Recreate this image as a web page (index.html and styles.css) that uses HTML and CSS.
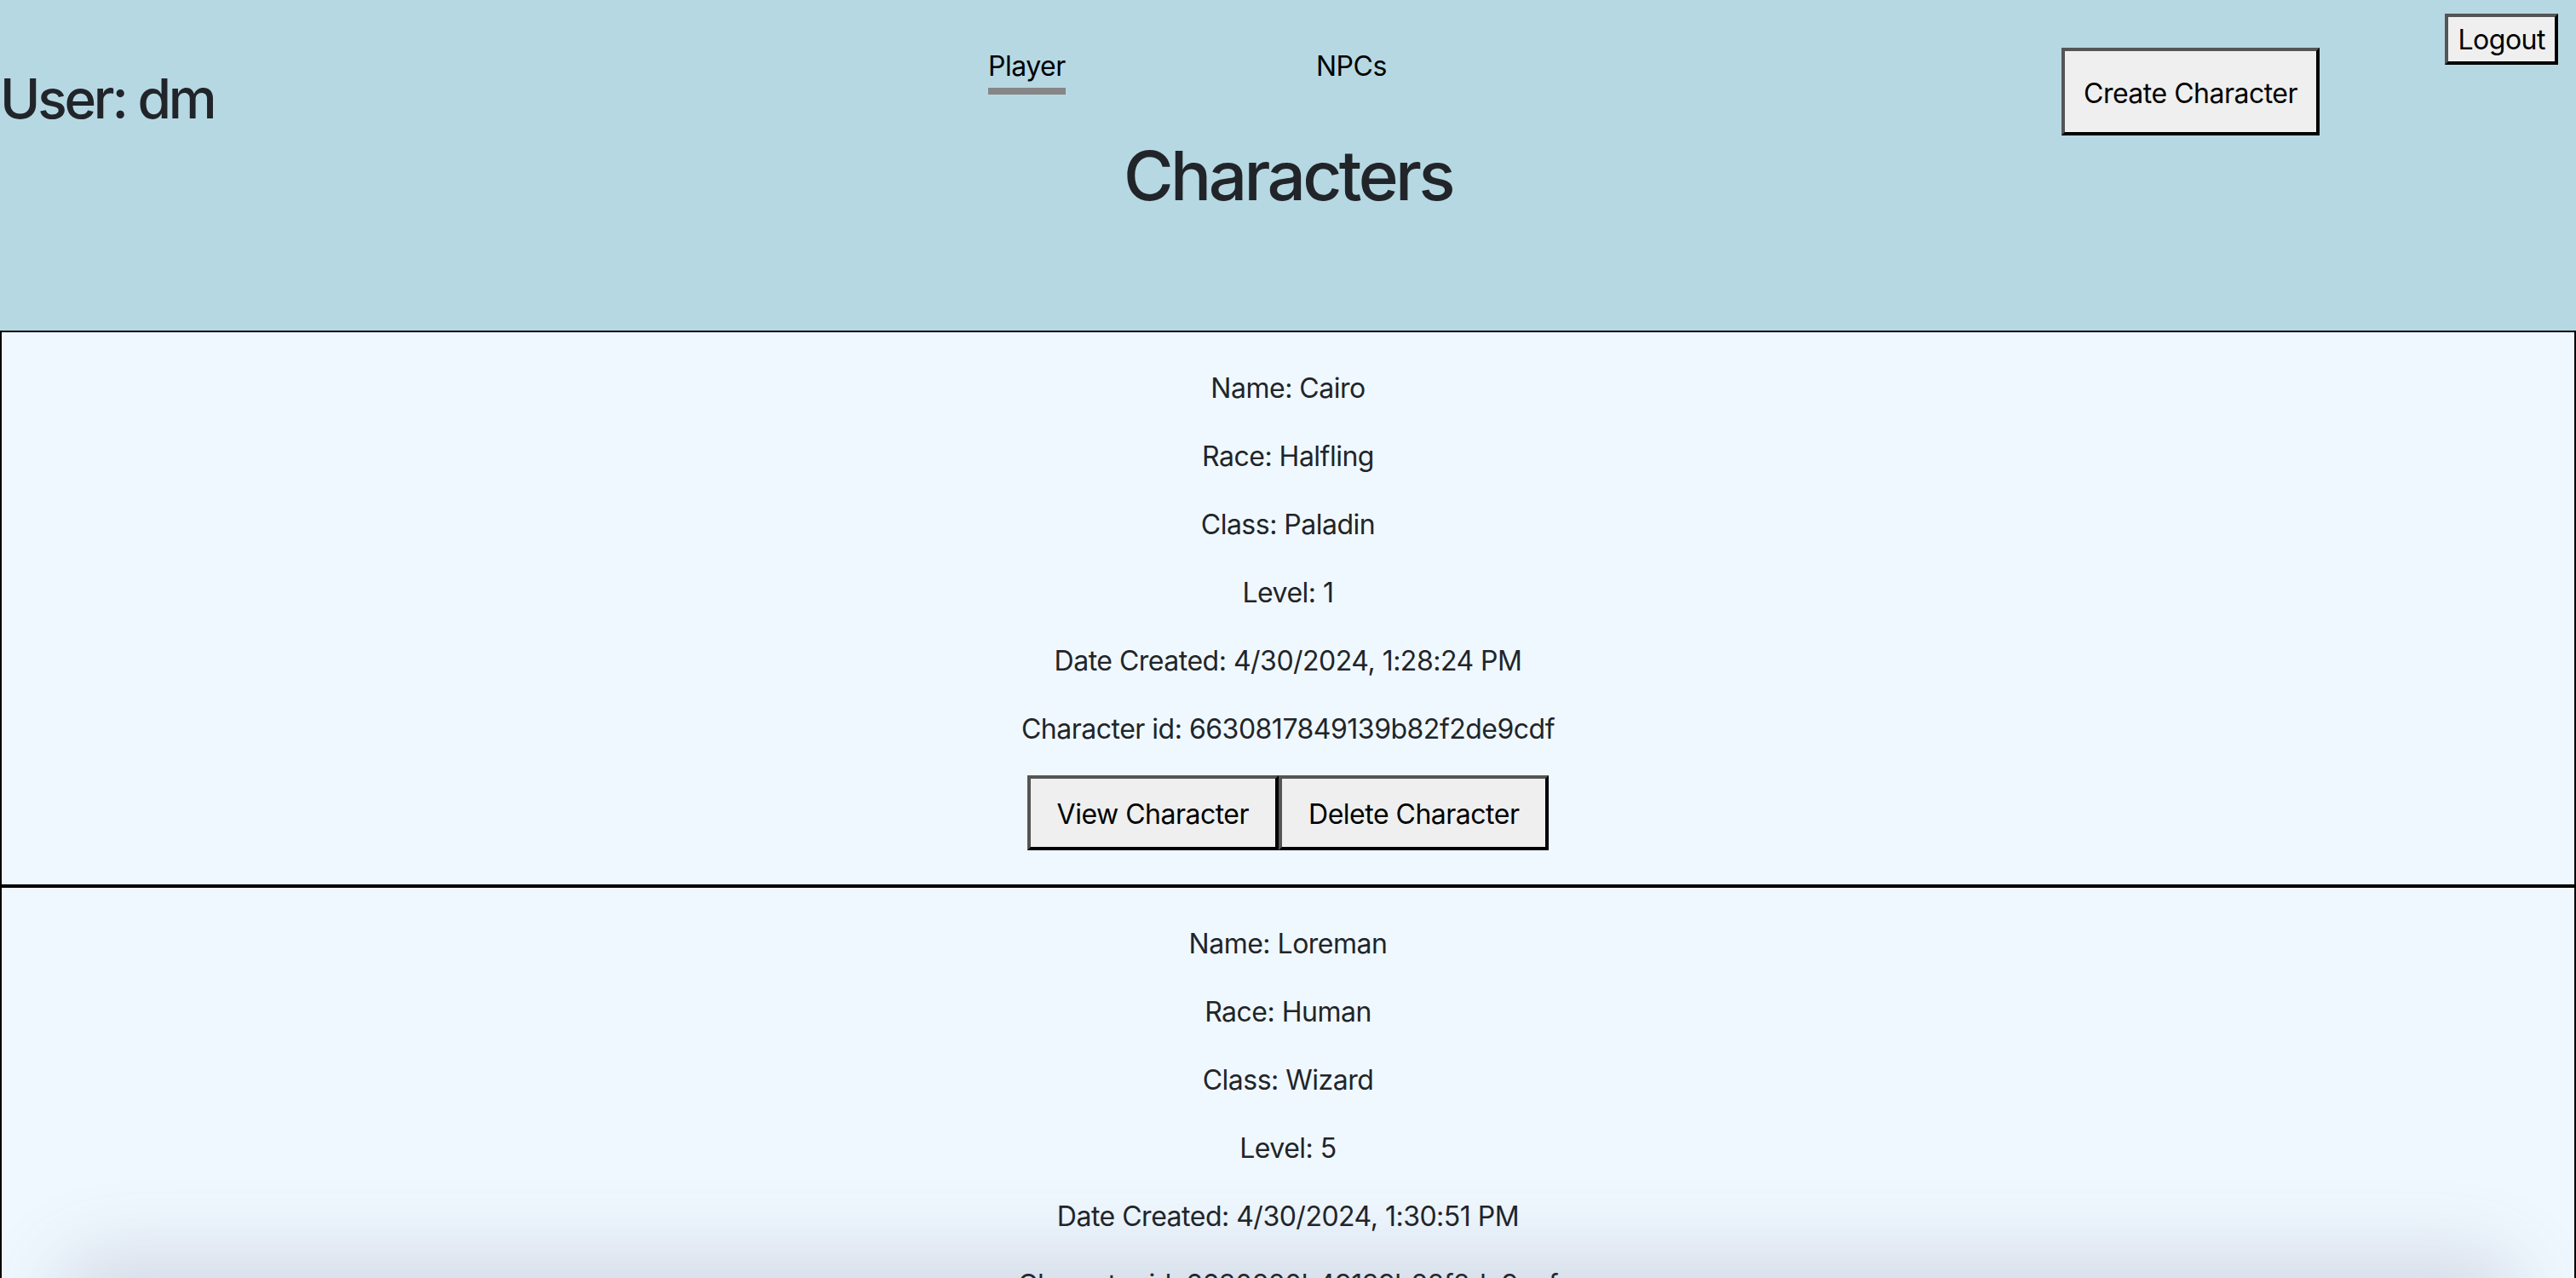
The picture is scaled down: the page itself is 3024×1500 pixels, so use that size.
FILE: index.html
```html
<!DOCTYPE html>
<html>
<head>
<meta charset="utf-8">
<title>Characters</title>
<link rel="stylesheet" href="styles.css">
</head>
<body>
<header class="topbar">
  <div class="toprow">
    <h2 class="user">User: dm</h2>
    <nav class="tabs">
      <div class="tab"><span class="tab-label active">Player</span></div>
      <div class="tab"><span class="tab-label">NPCs</span></div>
    </nav>
    <div class="create-cell"><button class="btn btn-create">Create Character</button></div>
  </div>
  <h1 class="title">Characters</h1>
  <button class="btn btn-logout">Logout</button>
</header>

<main class="cards">
  <section class="card">
    <p>Name: Cairo</p>
    <p>Race: Halfling</p>
    <p>Class: Paladin</p>
    <p>Level: 1</p>
    <p>Date Created: 4/30/2024, 1:28:24 PM</p>
    <p>Character id: 6630817849139b82f2de9cdf</p>
    <div class="actions"><button class="btn btn-card">View Character</button><button class="btn btn-card">Delete Character</button></div>
  </section>
  <section class="card">
    <p>Name: Loreman</p>
    <p>Race: Human</p>
    <p>Class: Wizard</p>
    <p>Level: 5</p>
    <p>Date Created: 4/30/2024, 1:30:51 PM</p>
    <p>Character id: 6630820b49139b82f2de9cef</p>
    <div class="actions"><button class="btn btn-card">View Character</button><button class="btn btn-card">Delete Character</button></div>
  </section>
</main>

<div class="bottom-shade"></div>
</body>
</html>
```
FILE: styles.css
```css
html, body {
  margin: 0;
  padding: 0;
}
body {
  font-family: Inter, "Noto Sans", sans-serif;
  font-size: 32px;
  line-height: 48px;
  color: #212529;
  background: #f0f8ff;
  overflow: hidden;
}

/* ---------- header ---------- */
.topbar {
  position: relative;
  height: 388px;
  box-sizing: border-box;
  background: #b6d8e3;
}
.toprow {
  display: grid;
  grid-template-columns: 1160px 1260px auto;
  align-items: start;
  height: 158px;
}
.user {
  margin: 78px 0 0;
  font-size: 64px;
  line-height: 76.8px;
  font-weight: 500;
  letter-spacing: -0.05em;
  color: #212529;
  white-space: nowrap;
}
.tabs {
  display: grid;
  grid-template-columns: 385px auto;
  margin-top: 54px;
}
.tab-label {
  display: inline-block;
  color: #000;
  font-size: 32px;
  line-height: 48px;
  letter-spacing: -0.5px;
  padding-bottom: 1px;
  border-bottom: 8px solid transparent;
}
.tab-label.active {
  border-bottom-color: #868686;
}
.create-cell {
  margin-top: 56px;
}

.title {
  margin: 0;
  text-align: center;
  font-size: 80px;
  line-height: 96px;
  font-weight: 500;
  letter-spacing: -0.045em;
  color: #212529;
}

/* ---------- buttons ---------- */
.btn {
  font-family: Inter, "Noto Sans", sans-serif;
  font-size: 32px;
  letter-spacing: -0.5px;
  color: #000;
  background: #efefef;
  border-style: solid;
  border-width: 4px;
  border-color: #555 #000 #000 #555;
  border-radius: 0;
  margin: 0;
  cursor: pointer;
}
.btn-create {
  padding: 29px 22px 25px;
  line-height: 41px;
}
.btn-logout {
  position: absolute;
  top: 16px;
  right: 21px;
  padding: 7px 11px 5px 12px;
  line-height: 40px;
}
.btn-card {
  padding: 22px 31px 18px;
  line-height: 40px;
}

/* ---------- cards ---------- */
.card {
  border: 2px solid #000;
  background: #f0f8ff;
  padding: 40px 0;
  text-align: center;
}
.card p {
  margin: 0 0 30px;
  padding-top: 2px;
  letter-spacing: -0.5px;
}
.actions {
  display: flex;
  justify-content: center;
}

/* ---------- bottom window shade ---------- */
.bottom-shade {
  position: fixed;
  left: 90px;
  right: 90px;
  bottom: -60px;
  height: 60px;
  border-radius: 60px;
  box-shadow: 0 0 90px 30px rgba(60, 70, 100, 0.16);
  pointer-events: none;
}
```
